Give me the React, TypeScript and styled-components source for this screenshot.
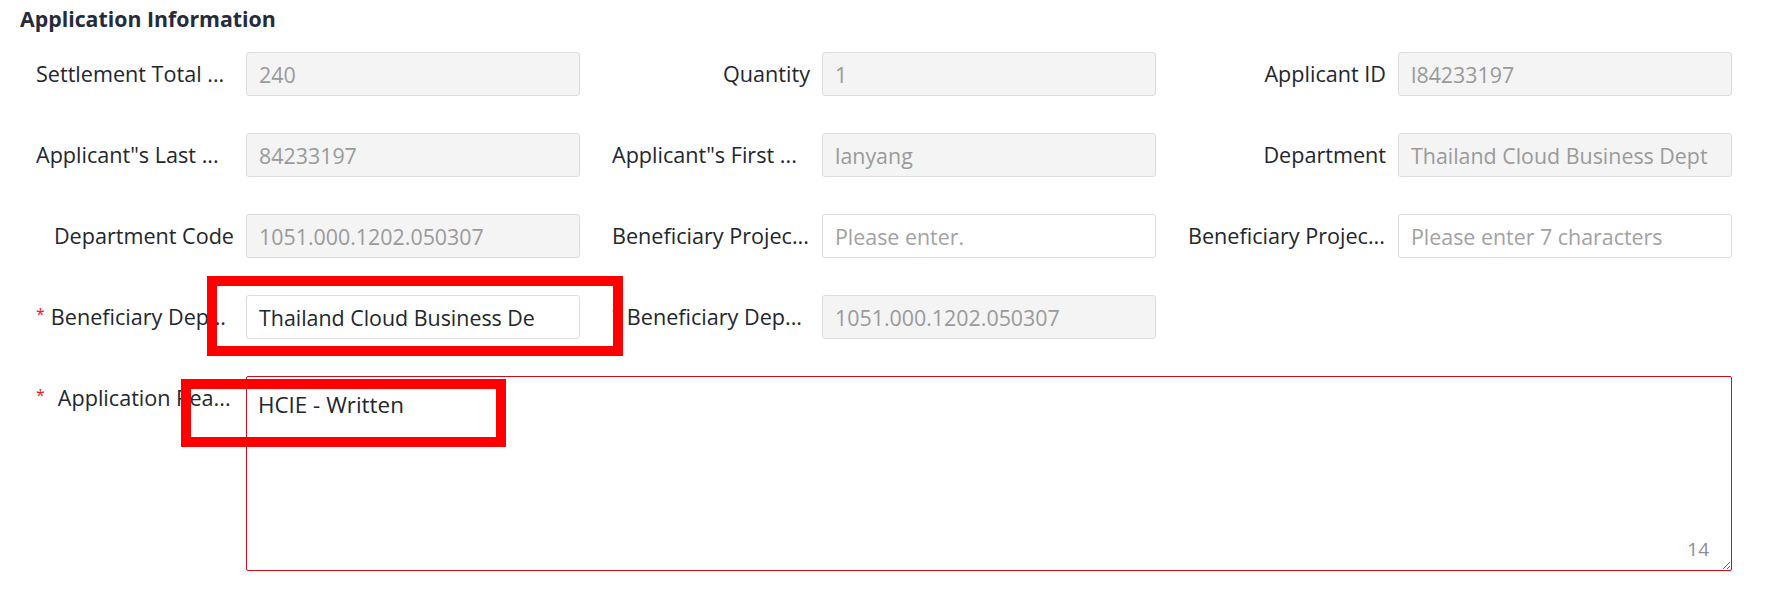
import React from "react";
import styled, { createGlobalStyle } from "styled-components";

const GlobalStyle = createGlobalStyle`
  html, body {
    margin: 0;
    padding: 0;
    background: #ffffff;
  }
  body {
    font-family: "Open Sans", "Noto Sans", "Liberation Sans", sans-serif;
    color: #252b3a;
  }
  * { box-sizing: border-box; }
`;

const Page = styled.div`
  position: relative;
  width: 1774px;
  height: 605px;
  padding: 6px 0 0 20px;
  overflow: hidden;
`;

const Title = styled.h2`
  margin: 0;
  font-size: 21.3px;
  line-height: 26px;
  font-weight: 700;
  color: #252b3a;
`;

const FormGrid = styled.div`
  display: grid;
  grid-template-columns: repeat(3, 544px);
  column-gap: 32px;
  row-gap: 37px;
  margin-top: 20px;
  padding-left: 16px;
`;

const FormItem = styled.div<{ $full?: boolean }>`
  display: flex;
  align-items: flex-start;
  grid-column: ${(p) => (p.$full ? "1 / -1" : "auto")};
`;

const Label = styled.label<{ $clipped?: boolean }>`
  flex: 0 0 210px;
  padding-right: 12px;
  font-size: 21.6px;
  line-height: 44px;
  color: #22262f;
  white-space: nowrap;
  overflow: hidden;
  text-align: ${(p) => (p.$clipped ? "left" : "right")};
`;

const Required = styled.span<{ $gap: number }>`
  display: inline-block;
  color: #f0141e;
  font-size: 16px;
  vertical-align: top;
  line-height: 38px;
  margin-right: ${(p) => p.$gap}px;
`;

const Field = styled.input<{ $disabled?: boolean }>`
  flex: 0 0 334px;
  width: 334px;
  height: 44px;
  padding: 0 12px;
  border: 1px solid #dcdcdc;
  border-radius: 3px;
  outline: none;
  font-family: inherit;
  font-size: 21.4px;
  background: ${(p) => (p.$disabled ? "#f4f4f4" : "#ffffff")};
  color: ${(p) => (p.$disabled ? "#9a9a9a" : "#22262f")};
  &::placeholder {
    color: #a2a2a2;
  }
`;

const AreaWrap = styled.div`
  position: relative;
  flex: 1 1 auto;
  height: 195px;
`;

const Area = styled.textarea`
  display: block;
  width: 100%;
  height: 100%;
  padding: 12px 11px;
  border: 1px solid #d40b1c;
  border-radius: 2px;
  outline: none;
  font-family: inherit;
  font-size: 22.4px;
  line-height: 31px;
  color: #22262f;
  background: #ffffff;
  resize: both;
`;

const Counter = styled.span`
  position: absolute;
  right: 23px;
  bottom: 10px;
  font-size: 19px;
  line-height: 24px;
  color: #8a8e99;
`;

const Marker = styled.div<{ $x: number; $y: number; $w: number; $h: number }>`
  position: absolute;
  left: ${(p) => p.$x}px;
  top: ${(p) => p.$y}px;
  width: ${(p) => p.$w}px;
  height: ${(p) => p.$h}px;
  border: 10px solid #ff0000;
  pointer-events: none;
`;

type Item = {
  label: string;
  clipped?: boolean;
  required?: number;
  value?: string;
  placeholder?: string;
  disabled?: boolean;
};

const items: Item[] = [
  { label: "Settlement Total ...", clipped: true, value: "240", disabled: true },
  { label: "Quantity", value: "1", disabled: true },
  { label: "Applicant ID", value: "l84233197", disabled: true },
  { label: "Applicant\"s Last ...", clipped: true, value: "84233197", disabled: true },
  { label: "Applicant\"s First ...", clipped: true, value: "lanyang", disabled: true },
  { label: "Department", value: "Thailand Cloud Business Dept", disabled: true },
  { label: "Department Code", value: "1051.000.1202.050307", disabled: true },
  { label: "Beneficiary Projec...", clipped: true, placeholder: "Please enter." },
  { label: "Beneficiary Projec...", clipped: true, placeholder: "Please enter 7 characters" },
  { label: "Beneficiary Dep...", clipped: true, required: 6, value: "Thailand Cloud Business De" },
  { label: "Beneficiary Dep...", clipped: true, required: 6, value: "1051.000.1202.050307", disabled: true },
];

export default function App() {
  return (
    <>
      <GlobalStyle />
      <Page>
        <Title>Application Information</Title>
        <FormGrid>
          {items.map((it, i) => (
            <FormItem key={i}>
              <Label $clipped={it.clipped}>
                {it.required !== undefined && <Required $gap={it.required}>*</Required>}
                {it.label}
              </Label>
              <Field
                $disabled={it.disabled}
                readOnly={it.disabled}
                defaultValue={it.value}
                placeholder={it.placeholder}
              />
            </FormItem>
          ))}
          <FormItem $full>
            <Label $clipped>
              <Required $gap={13}>*</Required>
              Application Rea...
            </Label>
            <AreaWrap>
              <Area defaultValue="HCIE - Written" />
              <Counter>14</Counter>
            </AreaWrap>
          </FormItem>
        </FormGrid>
        <Marker $x={207} $y={276} $w={416} $h={80} />
        <Marker $x={181} $y={379} $w={325} $h={68} />
      </Page>
    </>
  );
}
